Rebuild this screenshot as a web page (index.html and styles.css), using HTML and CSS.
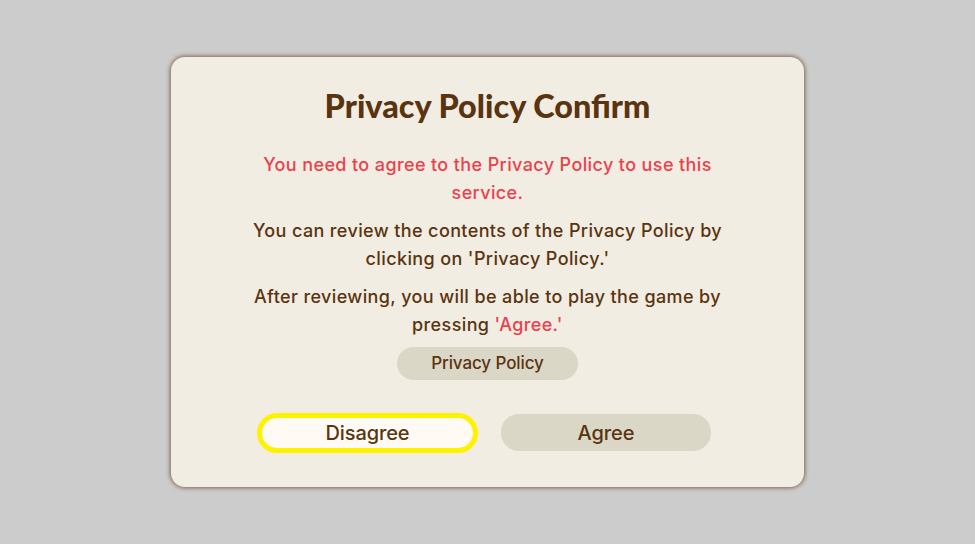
FILE: index.html
```html
<!DOCTYPE html>
<html lang="en">
  <head>
    <meta charset="UTF-8" />
    <title>Privacy Policy Confirm</title>
    <link rel="stylesheet" href="styles.css">
  </head>
  <body>
    <div class="dialog">
      <h1>Privacy Policy Confirm</h1>
      <p class="warning">You need to agree to the Privacy Policy to use this service.</p>
      <p>You can review the contents of the Privacy Policy by clicking on 'Privacy Policy.'</p>
      <p>After reviewing, you will be able to play the game by pressing <span class="accent">'Agree.'</span></p>
      <button class="policy-button">Privacy Policy</button>
      <div class="actions">
        <button class="action-button focused">Disagree</button>
        <button class="action-button">Agree</button>
      </div>
    </div>
  </body>
</html>
```

FILE: styles.css
```css
html,
body {
  height: 100%;
}

body {
  margin: 0;
  background-color: #cccccc;
  color: #5a3410;
  font-family: "Inter", "Noto Sans", sans-serif;
  display: flex;
  justify-content: center;
  align-items: center;
}

.dialog {
  box-sizing: border-box;
  width: 633px;
  height: 430px;
  padding: 30px 80px 0;
  background: #f1ede2;
  border-radius: 14px;
  box-shadow: 0 0 4px 1px #7d6555;
  text-align: center;
}

h1 {
  margin: 0 0 26px;
  font-family: "Lato", sans-serif;
  font-size: 32.4px;
  line-height: 38px;
  font-weight: 900;
}

p {
  margin: 0 0 11.2px;
  font-size: 18px;
  line-height: 27.5px;
  font-weight: 500;
  letter-spacing: 0.38px;
}

.warning,
.accent {
  color: #ec414c;
}

button {
  font-family: inherit;
  font-weight: 500;
  color: #5a3410;
  background: #dad7c6;
  border: none;
  cursor: pointer;
}

.policy-button {
  display: block;
  width: 181px;
  height: 33px;
  margin: -3px auto 0;
  border-radius: 17px;
  font-size: 17px;
  letter-spacing: -0.1px;
}

.actions {
  display: flex;
  justify-content: center;
  align-items: center;
  gap: 23px;
  margin-top: 33px;
  padding-right: 7px;
}

.action-button {
  width: 210px;
  height: 37px;
  border-radius: 18px;
  font-size: 20px;
  letter-spacing: -0.1px;
}

.focused {
  width: 221px;
  height: 40px;
  border-radius: 20px;
  background: #fffbf4;
  border: 5px solid #fff200;
}
```
